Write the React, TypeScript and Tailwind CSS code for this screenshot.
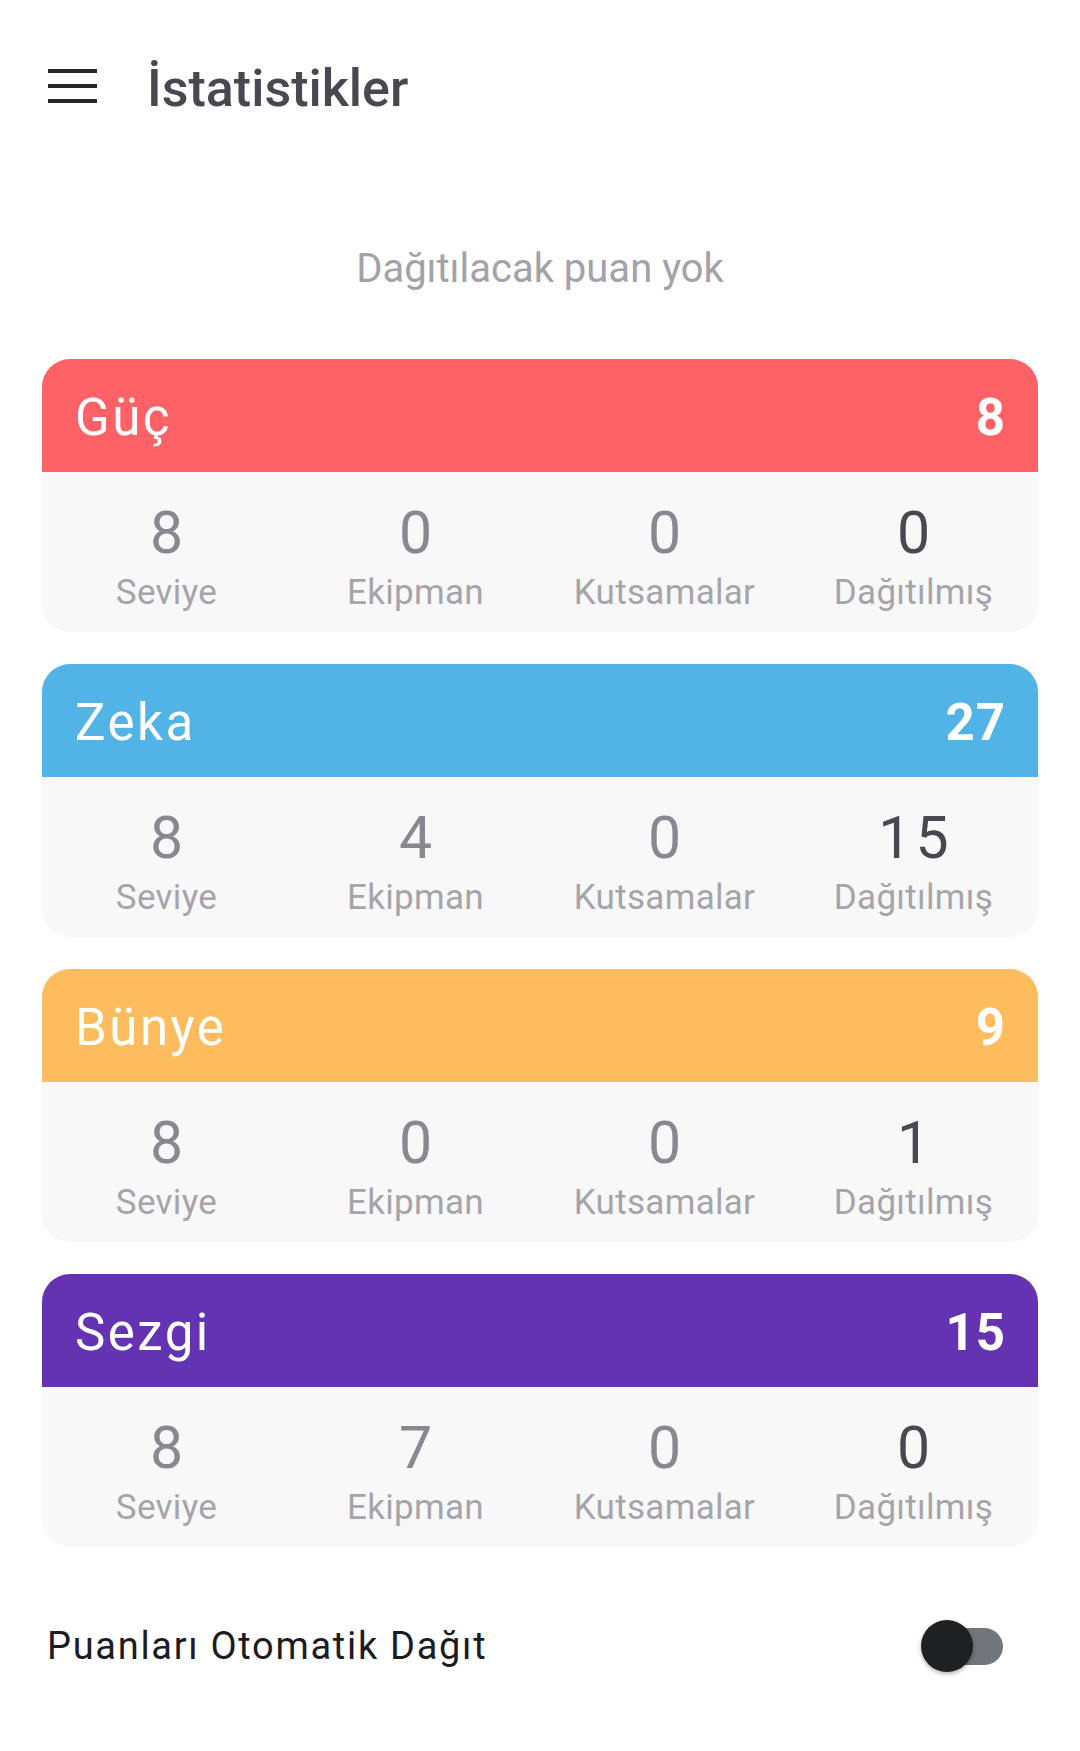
import React, { useState } from 'react';

interface Stat {
  name: string;
  total: number;
  color: string;
  level: number;
  equipment: number;
  blessings: number;
  distributed: number;
}

const stats: Stat[] = [
  { name: 'Güç', total: 8, color: 'bg-[#ff6266]', level: 8, equipment: 0, blessings: 0, distributed: 0 },
  { name: 'Zeka', total: 27, color: 'bg-[#52b4e6]', level: 8, equipment: 4, blessings: 0, distributed: 15 },
  { name: 'Bünye', total: 9, color: 'bg-[#fdbc5e]', level: 8, equipment: 0, blessings: 0, distributed: 1 },
  { name: 'Sezgi', total: 15, color: 'bg-[#6333b1]', level: 8, equipment: 7, blessings: 0, distributed: 0 },
];

function StatColumn({ value, label, dark }: { value: number; label: string; dark?: boolean }) {
  return (
    <div className="flex-1 flex flex-col items-center">
      <span className={`text-[59px] leading-[69px] tracking-[4px] pl-[4px] ${dark ? 'text-[#4a4751]' : 'text-[#8a8791]'}`}>{value}</span>
      <span className="mt-[5px] text-[35px] leading-[42px] tracking-[0.3px] text-[#a6a4ab]">{label}</span>
    </div>
  );
}

function StatCard({ stat }: { stat: Stat }) {
  return (
    <div className="rounded-[28px] overflow-hidden">
      <div className={`${stat.color} h-[113px] flex items-center justify-between pl-[33px] pr-[32px] pt-[6px] text-white`}>
        <span className="text-[51px] tracking-[2.5px]">{stat.name}</span>
        <span className="text-[51px] font-bold tracking-[1px]">{stat.total}</span>
      </div>
      <div className="bg-[#f8f8f9] h-[160px] flex pt-[26px]">
        <StatColumn value={stat.level} label="Seviye" />
        <StatColumn value={stat.equipment} label="Ekipman" />
        <StatColumn value={stat.blessings} label="Kutsamalar" />
        <StatColumn value={stat.distributed} label="Dağıtılmış" dark />
      </div>
    </div>
  );
}

export default function App() {
  const [auto, setAuto] = useState(false);

  return (
    <div className="min-h-[1751px] bg-white font-['Roboto',sans-serif]">
      {/* top bar */}
      <div className="h-[172px] flex items-center pl-[48px]">
        <button className="flex flex-col gap-[11px]">
          <div className="w-[49px] h-[4px] bg-[#28262d]" />
          <div className="w-[49px] h-[4px] bg-[#28262d]" />
          <div className="w-[49px] h-[4px] bg-[#28262d]" />
        </button>
        <h1 className="ml-[50px] mt-[5px] text-[52px] font-medium text-[#4a4751]">İstatistikler</h1>
      </div>

      <p className="mt-[67px] text-center text-[40px] text-[#a3a1a9]">Dağıtılacak puan yok</p>

      <div className="mt-[60px] px-[42px] flex flex-col gap-[32px]">
        {stats.map((s) => (
          <StatCard key={s.name} stat={s} />
        ))}
      </div>

      <div className="mt-[49px] h-[100px] flex items-center justify-between pl-[47px] pr-[77px]">
        <span className="text-[38px] tracking-[1.7px] text-[#1c1b1f]">Puanları Otomatik Dağıt</span>
        <button onClick={() => setAuto(!auto)} className="relative w-[82px] h-[52px] flex items-center">
          <div className="absolute right-0 w-[68px] h-[37px] rounded-full bg-[#72767b]" />
          <div
            className={`absolute top-0 w-[52px] h-[52px] rounded-full bg-[#1e2022] shadow-[0_2px_4px_rgba(0,0,0,0.3)] ${auto ? 'right-0' : 'left-0'}`}
          />
        </button>
      </div>
    </div>
  );
}
